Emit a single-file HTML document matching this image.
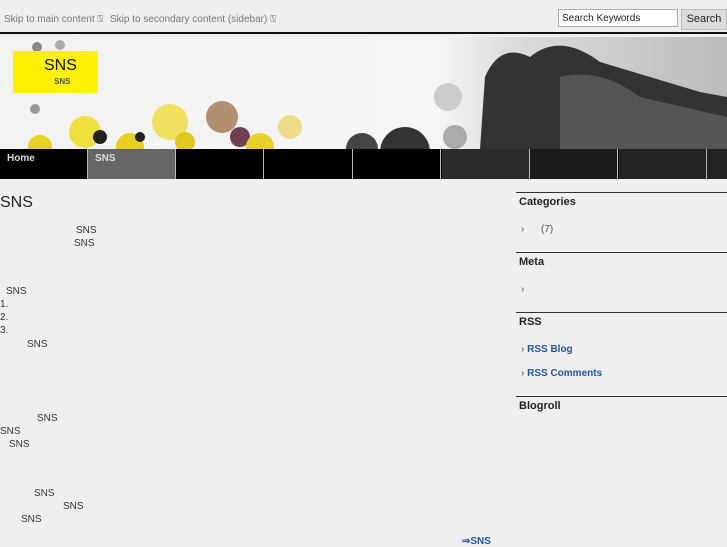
<!DOCTYPE html>
<html><head><meta charset="utf-8"><style>
body{margin:0;width:727px;height:545px;background:#efefef;font-family:"Liberation Sans",sans-serif;position:relative;overflow:hidden;color:#222}
.a{position:absolute;white-space:nowrap}
.sk{font-size:10px;color:#777;top:14px}
.t{font-size:10px;color:#333;margin-top:1px}
.nav{position:absolute;top:149px;left:0;width:727px;height:30px;background:#000}
.nav div{position:absolute;top:0;height:30px;width:88px;border-right:1px solid #bbb;color:#ddd;font-size:10px;font-weight:bold;padding:4px 0 0 7px;box-sizing:border-box}
.side{position:absolute;left:516px;width:211px;border-top:1px solid #333}
.side b{display:block;font-size:11px;padding:3px 0 0 3px}
.li{font-size:10px;color:#555;position:absolute;left:521px;margin-top:1px}
.rss{color:#2255aa;font-weight:bold}
</style></head><body>
<div class="a sk" style="left:4px">Skip to main content ⍂</div>
<div class="a sk" style="left:110px">Skip to secondary content (sidebar) ⍂</div>
<div class="a" style="left:558px;top:9px;height:18px;border:1px solid #aaa;background:#fff;font-size:10px;line-height:17px;padding-left:3px;box-sizing:border-box;width:120px">Search Keywords</div>
<div class="a" style="left:681px;top:9px;width:46px;height:21px;background:#ddd;border:1px solid #bbb;font-size:11px;line-height:19px;text-align:center;box-sizing:border-box">Search</div>
<div class="a" style="left:0;top:32px;width:727px;height:2px;background:#111"></div>
<svg class="a" style="left:0;top:37px" width="727" height="112">
<defs><linearGradient id="g" x1="0" x2="1"><stop offset="0" stop-color="#f2f2f2"/><stop offset=".6" stop-color="#f6f6f6"/><stop offset=".7" stop-color="#ddd"/><stop offset="1" stop-color="#bbb"/></linearGradient></defs>
<rect width="727" height="112" fill="url(#g)"/>
<circle cx="40" cy="110" r="12" fill="#e8d020"/><circle cx="85" cy="95" r="16" fill="#efe040"/><circle cx="130" cy="110" r="14" fill="#e8d020"/>
<circle cx="170" cy="85" r="18" fill="#f0e060"/><circle cx="185" cy="105" r="10" fill="#e0c820"/><circle cx="222" cy="80" r="16" fill="#b09070"/>
<circle cx="240" cy="100" r="10" fill="#704050"/><circle cx="290" cy="90" r="12" fill="#eedd88"/><circle cx="260" cy="110" r="14" fill="#e8d028"/>
<circle cx="100" cy="100" r="7" fill="#222"/><circle cx="140" cy="100" r="5" fill="#222"/><circle cx="362" cy="112" r="16" fill="#444"/>
<circle cx="405" cy="115" r="25" fill="#333"/><circle cx="448" cy="60" r="14" fill="#ccc"/><circle cx="455" cy="100" r="12" fill="#aaa"/>
<circle cx="37" cy="10" r="5" fill="#888"/><circle cx="60" cy="8" r="5" fill="#aaa"/><circle cx="35" cy="72" r="5" fill="#999"/>
<path d="M480 112 L485 40 Q500 5 530 20 Q560 -5 600 25 Q650 40 700 55 L727 60 L727 112Z" fill="#333"/>
<path d="M560 112 L560 40 Q600 30 640 60 L727 80 L727 112Z" fill="#555"/>
</svg>
<div class="a" style="left:13px;top:51px;width:85px;height:42px;background:#fff200"></div>
<div class="a" style="left:44px;top:57px;font-size:16px;color:#111">SNS</div>
<div class="a" style="left:54px;top:77px;font-size:8px;color:#555;font-weight:bold">SNS</div>
<div class="nav">
<div style="left:0">Home</div><div style="left:88px;background:#666">SNS</div><div style="left:176px"></div><div style="left:265px"></div><div style="left:353px"></div><div style="left:442px;background:#2a2a2a"></div><div style="left:530px;background:#1a1a1a"></div><div style="left:619px;background:#222"></div><div style="left:707px;width:20px;border:0;background:#222"></div>
</div>
<div class="a" style="left:0;top:194px;font-size:16px">SNS</div>
<div class="a t" style="left:76px;top:224px">SNS</div>
<div class="a t" style="left:74px;top:237px">SNS</div>
<div class="a t" style="left:6px;top:285px">SNS</div>
<div class="a t" style="left:0;top:298px">1.</div>
<div class="a t" style="left:0;top:311px">2.</div>
<div class="a t" style="left:0;top:324px">3.</div>
<div class="a t" style="left:27px;top:338px">SNS</div>
<div class="a t" style="left:37px;top:412px">SNS</div>
<div class="a t" style="left:0;top:425px">SNS</div>
<div class="a t" style="left:9px;top:438px">SNS</div>
<div class="a t" style="left:34px;top:487px">SNS</div>
<div class="a t" style="left:63px;top:500px">SNS</div>
<div class="a t" style="left:21px;top:513px">SNS</div>
<div class="a t rss" style="left:462px;top:535px">⇒SNS</div>
<div class="side" style="top:192px"><b>Categories</b></div>
<div class="li" style="top:223px">›&nbsp;&nbsp;&nbsp;&nbsp;&nbsp;&nbsp;(7)</div>
<div class="side" style="top:252px"><b>Meta</b></div>
<div class="li" style="top:283px">›</div>
<div class="side" style="top:312px"><b>RSS</b></div>
<div class="li" style="top:343px">› <span class="rss">RSS Blog</span></div>
<div class="li" style="top:367px">› <span class="rss">RSS Comments</span></div>
<div class="side" style="top:396px"><b>Blogroll</b></div>
</body></html>
